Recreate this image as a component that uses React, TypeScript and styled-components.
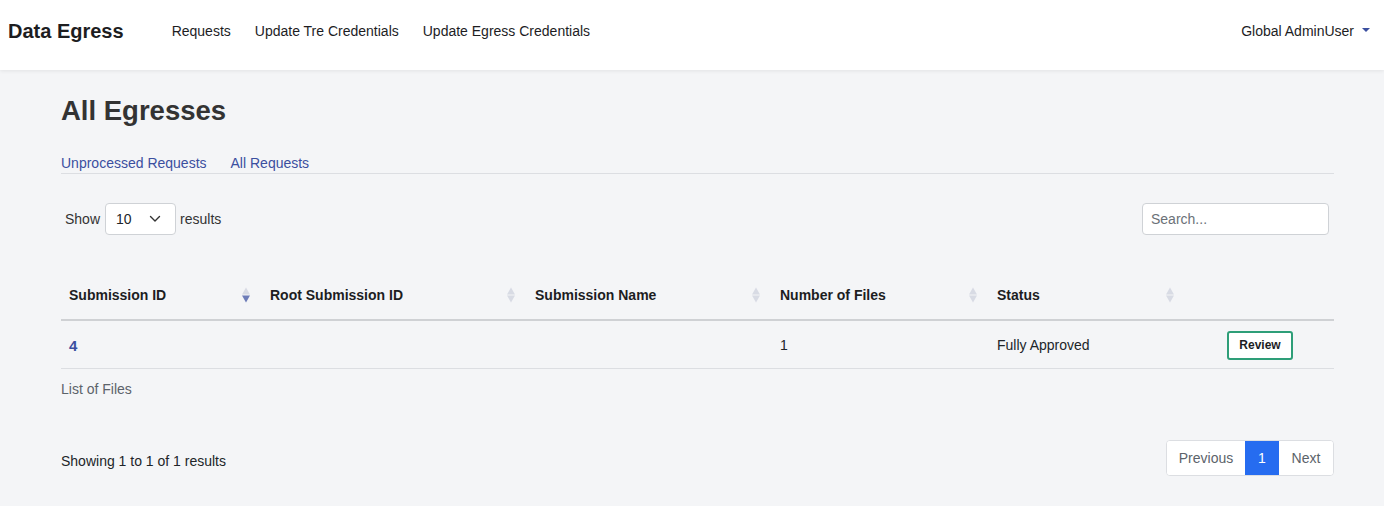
import React from "react";
import styled, { createGlobalStyle } from "styled-components";

const GlobalStyle = createGlobalStyle`
  html, body { margin: 0; padding: 0; }
  body {
    background: #f4f5f7;
    font-family: "Liberation Sans", Arial, Helvetica, sans-serif;
    color: #212529;
    font-size: 14px;
  }
  * { box-sizing: border-box; }
`;

const Page = styled.div`
  min-height: 506px;
  background: #f4f5f7;
`;

const NavBar = styled.header`
  height: 70px;
  background: #fff;
  box-shadow: 0 1px 4px rgba(0, 0, 0, 0.08);
  display: flex;
  align-items: center;
  padding: 0 14px 8px 8px;
`;

const Brand = styled.div`
  font-size: 20px;
  font-weight: 700;
  color: #1d1d1f;
  margin-right: 48px;
`;

const NavLinks = styled.nav`
  display: flex;
  gap: 24px;
  flex: 1;
`;

const NavLink = styled.a`
  font-size: 14px;
  color: #1d1d1f;
  text-decoration: none;
`;

const UserMenu = styled.div`
  display: flex;
  align-items: center;
  gap: 8px;
  font-size: 14px;
  color: #1d1d1f;
`;

const Caret = styled.span`
  width: 0;
  height: 0;
  border-left: 4px solid transparent;
  border-right: 4px solid transparent;
  border-top: 4px solid #3b4f9f;
  margin-top: -2px;
`;

const Main = styled.main`
  padding: 26px 50px 0 61px;
`;

const Title = styled.h1`
  margin: 0;
  font-size: 27.5px;
  font-weight: 700;
  color: #333;
  line-height: 30px;
`;

const Tabs = styled.div`
  display: flex;
  gap: 24px;
  margin-top: 28px;
  padding-bottom: 1px;
  border-bottom: 1px solid #dcdee2;
`;

const Tab = styled.a`
  font-size: 14px;
  color: #3b4f9f;
  text-decoration: none;
  line-height: 18px;
`;

const Controls = styled.div`
  display: flex;
  justify-content: space-between;
  align-items: center;
  margin-top: 29px;
  padding: 0 5px 0 4px;
`;

const ShowGroup = styled.div`
  display: flex;
  align-items: center;
  gap: 4px;
  font-size: 14px;
  color: #333;
`;

const SelectBox = styled.div`
  width: 71px;
  height: 32px;
  margin-left: 1px;
  background: #fff;
  border: 1px solid #cfd2d6;
  border-radius: 4px;
  display: flex;
  align-items: center;
  justify-content: space-between;
  padding: 0 14px 0 10px;
  font-size: 14px;
  color: #212529;
`;

const SearchInput = styled.input`
  width: 187px;
  height: 32px;
  background: #fff;
  border: 1px solid #cfd2d6;
  border-radius: 4px;
  padding: 0 8px;
  font-family: inherit;
  font-size: 14px;
  outline: none;
  &::placeholder { color: #6b7178; }
`;

const Table = styled.table`
  width: 100%;
  border-collapse: collapse;
  margin-top: 38px;
`;

const HeadCell = styled.th<{ $w: number }>`
  width: ${(p) => p.$w}px;
  text-align: left;
  font-size: 14px;
  font-weight: 700;
  color: #1d1d1f;
  padding: 0 8px 3px;
  height: 47px;
  border-bottom: 2px solid #cfd1d4;
  position: relative;
`;

const SortIcon = styled.span`
  position: absolute;
  right: 12px;
  top: 50%;
  transform: translateY(calc(-50% - 1px));
  display: flex;
  flex-direction: column;
  gap: 1px;
`;

const Arrow = styled.span<{ $dir: "up" | "down"; $active?: boolean }>`
  width: 0;
  height: 0;
  border-left: 4px solid transparent;
  border-right: 4px solid transparent;
  ${(p) =>
    p.$dir === "up"
      ? `border-bottom: 7px solid ${p.$active ? "#6d7cb8" : "#d8dbe4"};`
      : `border-top: 7px solid ${p.$active ? "#6d7cb8" : "#d8dbe4"};`}
`;

const Cell = styled.td`
  font-size: 14px;
  color: #212529;
  padding: 2px 8px 0;
  height: 48px;
  border-bottom: 1px solid #dcdee2;
`;

const IdLink = styled.a`
  font-weight: 700;
  font-size: 15px;
  color: #3b4f9f;
  text-decoration: none;
`;

const ReviewButton = styled.button`
  margin-left: 33px;
  width: 66px;
  height: 29px;
  background: #fff;
  border: 2px solid #2e9e78;
  border-radius: 3px;
  font-family: inherit;
  font-size: 12px;
  font-weight: 700;
  color: #1d1d1f;
  cursor: pointer;
`;

const Caption = styled.div`
  font-size: 14px;
  color: #5c636a;
  margin-top: 12px;
`;

const Footer = styled.div`
  display: flex;
  justify-content: space-between;
  align-items: center;
  margin-top: 43px;
`;

const Info = styled.div`
  font-size: 14px;
  color: #212529;
  padding-top: 6px;
`;

const Pager = styled.div`
  display: flex;
  background: #fff;
  border: 1px solid #dcdee2;
  border-radius: 4px;
  overflow: hidden;
  height: 36px;
`;

const PageBtn = styled.span<{ $active?: boolean; $w: number }>`
  width: ${(p) => p.$w}px;
  display: flex;
  align-items: center;
  justify-content: center;
  font-size: 14px;
  color: ${(p) => (p.$active ? "#fff" : "#5c636a")};
  background: ${(p) => (p.$active ? "#266cf0" : "#fff")};
`;

const columns = [
  { label: "Submission ID", w: 201, active: true },
  { label: "Root Submission ID", w: 265 },
  { label: "Submission Name", w: 245 },
  { label: "Number of Files", w: 217 },
  { label: "Status", w: 197 },
  { label: "", w: 148 },
];

const Chevron = () => (
  <svg width="12" height="8" viewBox="0 0 12 8" fill="none">
    <path d="M1.5 1.5 L6 6 L10.5 1.5" stroke="#333" strokeWidth="1.4" strokeLinecap="round" strokeLinejoin="round" />
  </svg>
);

export default function App() {
  return (
    <Page>
      <GlobalStyle />
      <NavBar>
        <Brand>Data Egress</Brand>
        <NavLinks>
          <NavLink>Requests</NavLink>
          <NavLink>Update Tre Credentials</NavLink>
          <NavLink>Update Egress Credentials</NavLink>
        </NavLinks>
        <UserMenu>
          Global AdminUser <Caret />
        </UserMenu>
      </NavBar>
      <Main>
        <Title>All Egresses</Title>
        <Tabs>
          <Tab>Unprocessed Requests</Tab>
          <Tab>All Requests</Tab>
        </Tabs>
        <Controls>
          <ShowGroup>
            Show
            <SelectBox>
              10 <Chevron />
            </SelectBox>
            results
          </ShowGroup>
          <SearchInput placeholder="Search..." />
        </Controls>
        <Table>
          <thead>
            <tr>
              {columns.map((c, i) => (
                <HeadCell key={i} $w={c.w}>
                  {c.label}
                  {i < 5 && (
                    <SortIcon>
                      <Arrow $dir="up" />
                      <Arrow $dir="down" $active={c.active} />
                    </SortIcon>
                  )}
                </HeadCell>
              ))}
            </tr>
          </thead>
          <tbody>
            <tr>
              <Cell>
                <IdLink>4</IdLink>
              </Cell>
              <Cell />
              <Cell />
              <Cell>1</Cell>
              <Cell>Fully Approved</Cell>
              <Cell>
                <ReviewButton>Review</ReviewButton>
              </Cell>
            </tr>
          </tbody>
        </Table>
        <Caption>List of Files</Caption>
        <Footer>
          <Info>Showing 1 to 1 of 1 results</Info>
          <Pager>
            <PageBtn $w={78}>Previous</PageBtn>
            <PageBtn $w={34} $active>
              1
            </PageBtn>
            <PageBtn $w={54}>Next</PageBtn>
          </Pager>
        </Footer>
      </Main>
    </Page>
  );
}
